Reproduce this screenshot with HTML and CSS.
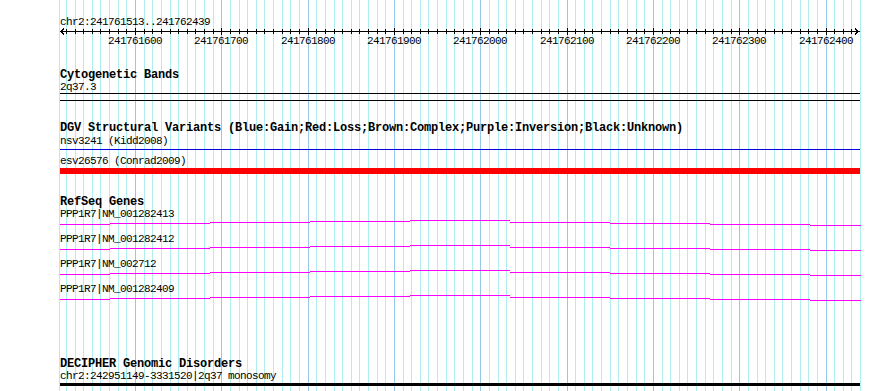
FILE: index.html
```html
<!DOCTYPE html>
<html lang="en">
<head>
    <meta charset="UTF-8">
    <title>chr2:241761513..241762439</title>
    <link rel="stylesheet" href="styles.css">
</head>
<body>
    <div class="view">
        <!-- grid behind the tracks: minor line every 10bp, major every 100bp -->
        <svg class="grid" width="890" height="391" viewBox="0 0 890 391" shape-rendering="crispEdges">
            <path class="grid-minor" d="M59.5 0V391M66.5 0V391M75.5 0V391M83.5 0V391M92.5 0V391M100.5 0V391M109.5 0V391M118.5 0V391M126.5 0V391
                M144.5 0V391M152.5 0V391M161.5 0V391M170.5 0V391M178.5 0V391M187.5 0V391M195.5 0V391M204.5 0V391M213.5 0V391
                M230.5 0V391M239.5 0V391M247.5 0V391M256.5 0V391M264.5 0V391M273.5 0V391M282.5 0V391M290.5 0V391M299.5 0V391
                M316.5 0V391M325.5 0V391M334.5 0V391M342.5 0V391M351.5 0V391M359.5 0V391M368.5 0V391M377.5 0V391M385.5 0V391
                M403.5 0V391M411.5 0V391M420.5 0V391M428.5 0V391M437.5 0V391M446.5 0V391M454.5 0V391M463.5 0V391M472.5 0V391
                M489.5 0V391M498.5 0V391M506.5 0V391M515.5 0V391M523.5 0V391M532.5 0V391M541.5 0V391M549.5 0V391M558.5 0V391
                M575.5 0V391M584.5 0V391M592.5 0V391M601.5 0V391M610.5 0V391M618.5 0V391M627.5 0V391M636.5 0V391M644.5 0V391
                M662.5 0V391M670.5 0V391M679.5 0V391M687.5 0V391M696.5 0V391M705.5 0V391M713.5 0V391M722.5 0V391M731.5 0V391
                M748.5 0V391M757.5 0V391M765.5 0V391M774.5 0V391M782.5 0V391M791.5 0V391M800.5 0V391M808.5 0V391M817.5 0V391
                M834.5 0V391M843.5 0V391M851.5 0V391M860.5 0V391"/>
            <path class="grid-major" d="M135.5 0V391M221.5 0V391M308.5 0V391M394.5 0V391M480.5 0V391M567.5 0V391M653.5 0V391M739.5 0V391M826.5 0V391"/>
        </svg>

        <div class="tracks">
            <div class="range">chr2:241761513..241762439</div>
            <svg class="ruler" width="800" height="22" viewBox="60 28 800 22" shape-rendering="crispEdges">
                <path class="ruler-line" d="M60 31.5H860M64 28.5L61 31.5L64 34.5M855 28.5L858 31.5L855 34.5"/>
                <path class="ruler-line" d="M66.5 29V34M75.5 29V34M83.5 29V34M92.5 29V34M100.5 29V34M109.5 29V34M118.5 29V34M126.5 29V34
                    M144.5 29V34M152.5 29V34M161.5 29V34M170.5 29V34M178.5 29V34M187.5 29V34M195.5 29V34M204.5 29V34M213.5 29V34
                    M230.5 29V34M239.5 29V34M247.5 29V34M256.5 29V34M264.5 29V34M273.5 29V34M282.5 29V34M290.5 29V34M299.5 29V34
                    M316.5 29V34M325.5 29V34M334.5 29V34M342.5 29V34M351.5 29V34M359.5 29V34M368.5 29V34M377.5 29V34M385.5 29V34
                    M403.5 29V34M411.5 29V34M420.5 29V34M428.5 29V34M437.5 29V34M446.5 29V34M454.5 29V34M463.5 29V34M472.5 29V34
                    M489.5 29V34M498.5 29V34M506.5 29V34M515.5 29V34M523.5 29V34M532.5 29V34M541.5 29V34M549.5 29V34M558.5 29V34
                    M575.5 29V34M584.5 29V34M592.5 29V34M601.5 29V34M610.5 29V34M618.5 29V34M627.5 29V34M636.5 29V34M644.5 29V34
                    M662.5 29V34M670.5 29V34M679.5 29V34M687.5 29V34M696.5 29V34M705.5 29V34M713.5 29V34M722.5 29V34M731.5 29V34
                    M748.5 29V34M757.5 29V34M765.5 29V34M774.5 29V34M782.5 29V34M791.5 29V34M800.5 29V34M808.5 29V34M817.5 29V34
                    M834.5 29V34M843.5 29V34M851.5 29V34"/>
                <path class="ruler-line" d="M135.5 28V35M221.5 28V35M308.5 28V35M394.5 28V35M480.5 28V35M567.5 28V35M653.5 28V35M739.5 28V35M826.5 28V35"/>
                <g class="ruler-labels">
                    <text x="135" y="44">241761600</text>
                    <text x="221" y="44">241761700</text>
                    <text x="308" y="44">241761800</text>
                    <text x="394" y="44">241761900</text>
                    <text x="480" y="44">241762000</text>
                    <text x="567" y="44">241762100</text>
                    <text x="653" y="44">241762200</text>
                    <text x="739" y="44">241762300</text>
                    <text x="826" y="44">241762400</text>
                </g>
            </svg>

            <section class="track track-cyto">
                <div class="track-title">Cytogenetic Bands</div>
                <div class="label">2q37.3</div>
                <div class="band"></div>
            </section>

            <section class="track track-dgv">
                <div class="track-title">DGV Structural Variants (Blue:Gain;Red:Loss;Brown:Complex;Purple:Inversion;Black:Unknown)</div>
                <div class="label">nsv3241 (Kidd2008)</div>
                <div class="variant variant-gain"></div>
                <div class="label label-gap">esv26576 (Conrad2009)</div>
                <div class="variant variant-loss"></div>
            </section>

            <section class="track track-genes">
                <div class="track-title">RefSeq Genes</div>
                <div class="gene-list">
                    <div class="gene">
                        <div class="label">PPP1R7|NM_001282413</div>
                        <svg class="intron" width="801" height="13" viewBox="60 220 801 13" shape-rendering="crispEdges">
                            <path d="M60 224.5H110M110 223.5H210M210 222.5H310M310 221.5H410M410 220.5H510M510 222.5H610M610 223.5H710M710 224.5H810M810 225.5H861"/>
                        </svg>
                    </div>
                    <div class="gene">
                        <div class="label">PPP1R7|NM_001282412</div>
                        <svg class="intron" width="801" height="13" viewBox="60 220 801 13" shape-rendering="crispEdges">
                            <path d="M60 224.5H110M110 223.5H210M210 222.5H310M310 221.5H410M410 220.5H510M510 222.5H610M610 223.5H710M710 224.5H810M810 225.5H861"/>
                        </svg>
                    </div>
                    <div class="gene">
                        <div class="label">PPP1R7|NM_002712</div>
                        <svg class="intron" width="801" height="13" viewBox="60 220 801 13" shape-rendering="crispEdges">
                            <path d="M60 224.5H110M110 223.5H210M210 222.5H310M310 221.5H410M410 220.5H510M510 222.5H610M610 223.5H710M710 224.5H810M810 225.5H861"/>
                        </svg>
                    </div>
                    <div class="gene">
                        <div class="label">PPP1R7|NM_001282409</div>
                        <svg class="intron" width="801" height="13" viewBox="60 220 801 13" shape-rendering="crispEdges">
                            <path d="M60 224.5H110M110 223.5H210M210 222.5H310M310 221.5H410M410 220.5H510M510 222.5H610M610 223.5H710M710 224.5H810M810 225.5H861"/>
                        </svg>
                    </div>
                </div>
            </section>

            <section class="track track-decipher">
                <div class="track-title">DECIPHER Genomic Disorders</div>
                <div class="label">chr2:242951149-3331520|2q37 monosomy</div>
                <div class="disorder"></div>
            </section>
        </div>
    </div>
</body>
</html>
```

FILE: styles.css
```css
body {
    margin: 0;
    background-color: #fff;
    font-family: "Liberation Mono", "DejaVu Sans Mono", monospace;
    color: #000;
}
.view {
    display: grid;
    width: 890px;
    height: 391px;
    overflow: hidden;
}
.grid,
.tracks {
    grid-area: 1 / 1;
}
.grid {
    display: block;
}
.grid-minor {
    stroke: #afeef0;
    stroke-width: 1;
}
.grid-major {
    stroke: #96c8ea;
    stroke-width: 1;
}
.tracks {
    padding-left: 60px;
    width: 800px;
}
.range,
.label {
    font-size: 11px;
    letter-spacing: -0.6px;
    line-height: 12px;
    height: 12px;
    white-space: nowrap;
}
.range {
    margin-top: 16px;
}
.ruler {
    display: block;
}
.ruler-line {
    stroke: #000;
    stroke-width: 1;
    fill: none;
}
.ruler-labels {
    font-family: "Liberation Mono", "DejaVu Sans Mono", monospace;
    font-size: 11px;
    letter-spacing: -0.6px;
    text-anchor: middle;
    fill: #000;
}
.track-title {
    font-size: 12px;
    font-weight: bold;
    letter-spacing: -0.2px;
    line-height: 12px;
    height: 12px;
    white-space: nowrap;
}
.track-cyto {
    margin-top: 19px;
}
.band {
    height: 8px;
    border-top: 1px solid #000;
    border-bottom: 1px solid #000;
    box-sizing: border-box;
}
.track-dgv {
    margin-top: 21px;
}
.track-dgv .label {
    margin-top: 1px;
}
.variant-gain {
    margin-top: 2px;
    height: 1px;
    background-color: #0000dd;
}
.track-dgv .label-gap {
    margin-top: 5px;
}
.variant-loss {
    margin-top: 1px;
    height: 6px;
    background-color: #ff0000;
}
.track-genes {
    margin-top: 22px;
}
.intron {
    display: block;
}
.intron path {
    stroke: #ff00ff;
    stroke-width: 1;
    fill: none;
}
.track-decipher {
    margin-top: 50px;
}
.disorder {
    margin-top: 1px;
    height: 3px;
    background-color: #000;
}
```
